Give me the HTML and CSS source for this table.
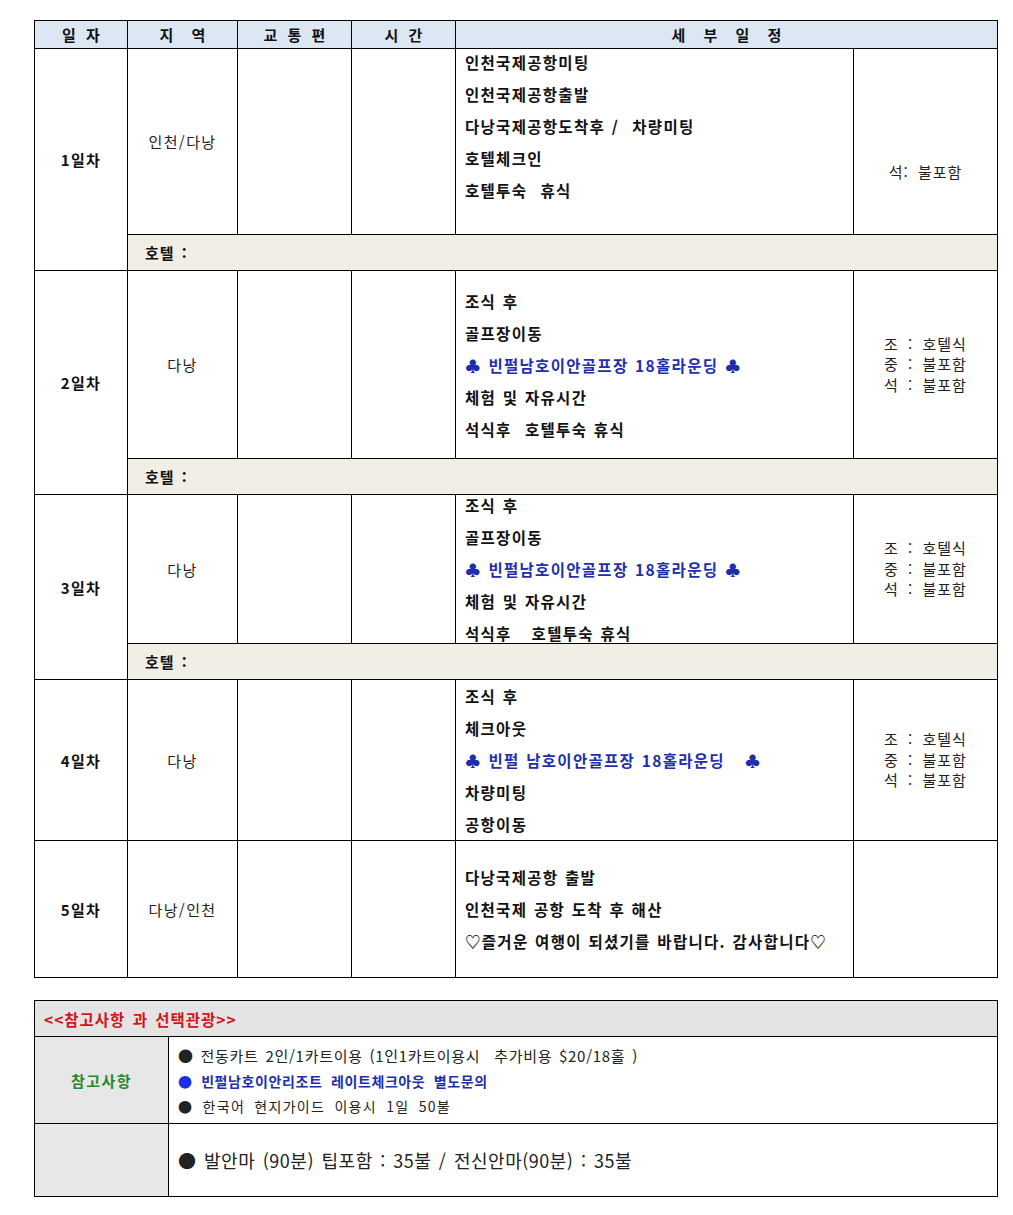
FILE: index.html
```html
<!DOCTYPE html>
<html lang="ko">
<head>
<meta charset="utf-8">
<title>일정표</title>
<link rel="stylesheet" href="styles.css">
</head>
<body>
<div class="page">
  <table class="sched">
    <colgroup>
      <col class="c-day"><col class="c-reg"><col class="c-trans"><col class="c-time"><col class="c-detail"><col class="c-meal">
    </colgroup>
    <thead>
      <tr class="head">
        <th><span class="ls-a">일 자</span></th>
        <th><span class="ls-b">지 역</span></th>
        <th><span class="ls-c">교 통 편</span></th>
        <th><span class="ls-a">시 간</span></th>
        <th colspan="2"><span class="ls-b">세 부 일 정</span></th>
      </tr>
    </thead>
    <tbody>
      <tr class="r1">
        <td rowspan="2" class="day">1일차</td>
        <td class="reg">인천/다낭</td>
        <td></td><td></td>
        <td class="detail"><div class="lines h1 shift-up">
          <p>인천국제공항미팅</p>
          <p>인천국제공항출발</p>
          <p>다낭국제공항도착후 / &nbsp;차량미팅</p>
          <p>호텔체크인</p>
          <p>호텔투숙 &nbsp;휴식</p>
        </div></td>
        <td class="meal"><div class="meal-low">석: 불포함</div></td>
      </tr>
      <tr class="hotel"><td colspan="5">호텔 :</td></tr>

      <tr class="r2">
        <td rowspan="2" class="day">2일차</td>
        <td class="reg">다낭</td>
        <td></td><td></td>
        <td class="detail"><div class="lines h2">
          <p>조식 후</p>
          <p>골프장이동</p>
          <p class="blue">♣ 빈펄남호이안골프장 18홀라운딩 ♣</p>
          <p>체험 및 자유시간</p>
          <p>석식후 &nbsp;호텔투숙 휴식</p>
        </div></td>
        <td class="meal"><div>조 : 호텔식<br>중 : 불포함<br>석 : 불포함</div></td>
      </tr>
      <tr class="hotel"><td colspan="5">호텔 :</td></tr>

      <tr class="r3">
        <td rowspan="2" class="day">3일차</td>
        <td class="reg">다낭</td>
        <td></td><td></td>
        <td class="detail"><div class="lines h3">
          <p>조식 후</p>
          <p>골프장이동</p>
          <p class="blue">♣ 빈펄남호이안골프장 18홀라운딩 ♣</p>
          <p>체험 및 자유시간</p>
          <p>석식후 &nbsp;&nbsp;호텔투숙 휴식</p>
        </div></td>
        <td class="meal"><div>조 : 호텔식<br>중 : 불포함<br>석 : 불포함</div></td>
      </tr>
      <tr class="hotel"><td colspan="5">호텔 :</td></tr>

      <tr class="r4">
        <td class="day">4일차</td>
        <td class="reg">다낭</td>
        <td></td><td></td>
        <td class="detail"><div class="lines h4">
          <p>조식 후</p>
          <p>체크아웃</p>
          <p class="blue">♣ 빈펄 남호이안골프장 18홀라운딩 &nbsp;&nbsp;♣</p>
          <p>차량미팅</p>
          <p>공항이동</p>
        </div></td>
        <td class="meal"><div>조 : 호텔식<br>중 : 불포함<br>석 : 불포함</div></td>
      </tr>

      <tr class="r5">
        <td class="day">5일차</td>
        <td class="reg">다낭/인천</td>
        <td></td><td></td>
        <td class="detail"><div class="lines h5">
          <p>다낭국제공항 출발</p>
          <p>인천국제 공항 도착 후 해산</p>
          <p>♡즐거운 여행이 되셨기를 바랍니다. 감사합니다♡</p>
        </div></td>
        <td class="meal"></td>
      </tr>
    </tbody>
  </table>

  <table class="notes">
    <colgroup><col class="n-lab"><col class="n-body"></colgroup>
    <tbody>
      <tr class="n-head"><td colspan="2">&lt;&lt;참고사항 과 선택관광&gt;&gt;</td></tr>
      <tr class="n-r1">
        <td class="n-label">참고사항</td>
        <td class="n-text">
          <p class="t1">● 전동카트 2인/1카트이용 (1인1카트이용시 &nbsp;추가비용 $20/18홀 )</p>
          <p class="t2"><span class="dot-blue">●</span> 빈펄남호이안리조트 레이트체크아웃 별도문의</p>
          <p class="t3">● 한국어 현지가이드 이용시 1일 50불</p>
        </td>
      </tr>
      <tr class="n-r2">
        <td class="n-label"></td>
        <td class="n-text"><p class="t4">● 발안마 (90분) 팁포함 : 35불 / 전신안마(90분) : 35불</p></td>
      </tr>
    </tbody>
  </table>
</div>
</body>
</html>
```

FILE: styles.css
```css
* { box-sizing: border-box; }
body {
  margin: 0;
  background: #fff;
  font-family: "Noto Sans CJK KR", "Noto Sans", sans-serif;
  color: #111;
}
.page {
  padding: 20px 16px 0 34px;
}
p { margin: 0; }

table {
  border-collapse: collapse;
  table-layout: fixed;
  width: 963px;
}
td, th {
  border: 1px solid #000;
  padding: 0;
}

.c-day { width: 93px; }
.c-reg { width: 110px; }
.c-trans { width: 114px; }
.c-time { width: 104px; }
.c-detail { width: 398px; }
.c-meal { width: 144px; }

.head { height: 28px; background: #dde6f3; }
.head th {
  font-size: 15px;
  font-weight: 700;
  line-height: 20px;
  text-align: center;
  vertical-align: middle;
}
.ls-a { letter-spacing: 3px; padding-left: 3px; }
.ls-b { letter-spacing: 7px; padding-left: 7px; }
.ls-c { letter-spacing: 3px; padding-left: 3px; }

.r1 { height: 186px; }
.r2 { height: 188px; }
.r3 { height: 149px; }
.r4 { height: 161px; }
.r5 { height: 137px; }
.hotel { height: 36px; }

.day {
  text-align: center;
  vertical-align: middle;
  font-size: 15px;
  font-weight: 700;
  letter-spacing: 1.3px;
}
.reg {
  text-align: center;
  vertical-align: middle;
  font-size: 15px;
  letter-spacing: 1.4px;
  color: #222;
}
.detail { vertical-align: middle; padding-left: 9px; }
.lines {
  display: flex;
  flex-direction: column;
  justify-content: center;
  font-size: 15.5px;
  font-weight: 700;
  line-height: 32px;
  letter-spacing: 1.3px;
  word-spacing: 1px;
  white-space: nowrap;
}
.h1 { height: 185px; }
.h2 { height: 187px; }
.h3 { height: 148px; }
.h4 { height: 160px; }
.h5 { height: 136px; }
.shift-up { padding-bottom: 32px; }
.blue { color: #1d2fae; }

.meal {
  text-align: center;
  vertical-align: middle;
  font-size: 15px;
  line-height: 20.5px;
  letter-spacing: 1px;
  word-spacing: 4px;
  color: #222;
}
.meal-low { padding-top: 62px; }

.hotel td {
  background: #f1eee5;
  font-size: 15px;
  font-weight: 700;
  letter-spacing: 1px;
  word-spacing: 2px;
  padding-left: 17px;
  vertical-align: middle;
}

.notes { margin-top: 22px; }
.n-lab { width: 134px; }
.n-body { width: 829px; }
.n-head { height: 36px; }
.n-head td {
  background: #e4e4e4;
  color: #d1161b;
  font-size: 15.5px;
  font-weight: 700;
  letter-spacing: 1px;
  word-spacing: 2px;
  padding-left: 9px;
  vertical-align: middle;
}
.n-r1 { height: 87px; }
.n-r2 { height: 73px; }
.n-label {
  background: #e7e7e7;
  color: #1f8a2a;
  font-size: 15px;
  font-weight: 700;
  letter-spacing: 1.5px;
  text-align: center;
  vertical-align: middle;
}
.n-text {
  padding-left: 9px;
  vertical-align: middle;
  color: #222;
  white-space: nowrap;
}
.t1 { font-size: 15px; line-height: 26px; letter-spacing: 0.7px; word-spacing: 2px; }
.t2 { font-size: 14px; line-height: 25px; font-weight: 700; color: #1d2fae; letter-spacing: 0.6px; word-spacing: 4px; }
.dot-blue { color: #1a2ee8; }
.t3 { font-size: 14px; line-height: 24px; letter-spacing: 1.3px; word-spacing: 4px; }
.t4 { font-size: 18px; line-height: 26px; letter-spacing: 0.5px; word-spacing: 2px; }
```
